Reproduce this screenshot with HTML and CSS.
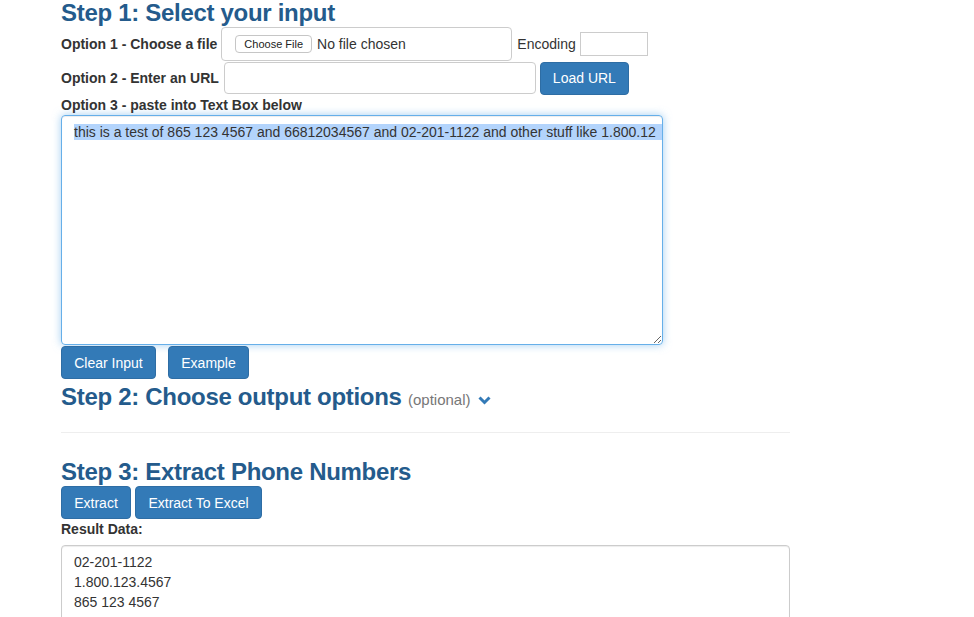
FILE: index.html
```html
<!DOCTYPE html>
<html lang="en">
<head>
  <meta charset="UTF-8">
  <title>Extract Phone Numbers</title>
  <link rel="stylesheet" href="styles.css">
</head>
<body>
  <div class="page">
    <h3 class="step">Step 1: Select your input</h3>

    <div class="row row-file">
      <label class="opt">Option 1 - Choose a file</label>
      <div class="file-box">
        <span class="file-btn">Choose File</span>
        <span class="file-name">No file chosen</span>
      </div>
      <span class="enc-label">Encoding</span>
      <input type="text" class="enc-input">
    </div>

    <div class="row row-url">
      <label class="opt">Option 2 - Enter an URL</label>
      <input type="text" class="url-input">
      <button class="btn btn-load">Load URL</button>
    </div>

    <div class="opt opt3">Option 3 - paste into Text Box below</div>
    <div class="input-box"><span class="sel">this is a test of 865 123 4567 and 66812034567 and 02-201-1122 and other stuff like 1.800.12</span></div>

    <div class="btn-row">
      <button class="btn btn-clear">Clear Input</button>
      <button class="btn btn-example">Example</button>
    </div>

    <h3 class="step step2">Step 2: Choose output options <small class="optional">(optional)</small>
      <svg class="chev" width="13" height="9" viewBox="0 0 13 9"><polyline points="1.5,1.5 6.5,6.5 11.5,1.5" fill="none" stroke="#337ab7" stroke-width="3"/></svg>
    </h3>

    <hr class="sep">

    <h3 class="step">Step 3: Extract Phone Numbers</h3>
    <div class="btn-row btn-row-extract">
      <button class="btn btn-extract">Extract</button>
      <button class="btn btn-excel">Extract To Excel</button>
    </div>

    <div class="opt result-label">Result Data:</div>
    <div class="result-box">02-201-1122<br>1.800.123.4567<br>865 123 4567</div>
  </div>
</body>
</html>
```

FILE: styles.css
```css
body {
  margin: 0;
  font-family: "Liberation Sans", Arial, sans-serif;
  font-size: 14px;
  color: #333;
  background: #fff;
  overflow: hidden;
}

.page {
  padding-left: 61px;
  width: 729px;
}

.step {
  margin: 0;
  font-size: 24px;
  line-height: 26px;
  font-weight: bold;
  letter-spacing: -0.3px;
  color: #245b8c;
}

.row {
  display: flex;
  align-items: center;
}

.row-file {
  margin-top: 1px;
  height: 34px;
}

.row-url {
  height: 34px;
}

.opt {
  font-weight: bold;
  line-height: 20px;
}

.file-box {
  margin-left: 4px;
  width: 276px;
  height: 32px;
  border: 1px solid #ccc;
  border-radius: 4px;
  display: flex;
  align-items: center;
  padding-left: 13px;
}

.file-btn {
  font-size: 11px;
  line-height: 14px;
  padding: 1px 8px;
  border: 1px solid #c6c6c6;
  border-radius: 4px;
  background: #fff;
  color: #222;
}

.file-name {
  margin-left: 5px;
}

.enc-label {
  margin-left: 5px;
}

.enc-input {
  margin: 0 0 0 4px;
  width: 62px;
  height: 20px;
  border: 1px solid #ccc;
  padding: 1px 2px;
  font: inherit;
}

.url-input {
  margin: 0 0 0 5px;
  width: 312px;
  height: 32px;
  padding: 0 12px;
  box-sizing: border-box;
  border: 1px solid #ccc;
  border-radius: 4px;
  font: inherit;
}

.btn {
  font-family: inherit;
  font-size: 14px;
  color: #fff;
  background: #337ab7;
  border: 1px solid #2e6da4;
  border-radius: 4px;
  height: 33px;
  padding: 0 8px;
  white-space: nowrap;
  cursor: pointer;
}

.btn-load {
  margin-left: 4px;
  width: 89px;
}

.input-box {
  width: 602px;
  height: 230px;
  box-sizing: border-box;
  padding: 6px 12px;
  border: 1px solid #66afe9;
  border-radius: 4px;
  box-shadow: inset 0 1px 1px rgba(0,0,0,.075), 0 0 8px rgba(102,175,233,.6);
  line-height: 20px;
  white-space: nowrap;
  overflow: hidden;
  resize: both;
}

.sel {
  background: #b3d4fc;
  padding-right: 20px;
}

.btn-row {
  display: flex;
  gap: 12px;
  margin-top: 1px;
}

.btn-clear {
  width: 95px;
}

.btn-example {
  width: 81px;
}

.step2 {
  margin-top: 5px;
}

.optional {
  font-size: 15px;
  font-weight: normal;
  color: #777;
  letter-spacing: 0;
}

.chev {
  margin-left: 1px;
}

.sep {
  margin: 19px 0 26px;
  border: 0;
  border-top: 1px solid #eee;
}

.btn-row-extract {
  gap: 4px;
  margin-top: 1px;
}

.btn-extract {
  width: 70px;
}

.btn-excel {
  width: 127px;
}

.result-label {
  margin: 0 0 6px;
}

.result-box {
  height: 100px;
  padding: 6px 12px;
  border: 1px solid #ccc;
  border-radius: 4px;
  box-shadow: inset 0 1px 1px rgba(0,0,0,.075);
  line-height: 20px;
}
```
